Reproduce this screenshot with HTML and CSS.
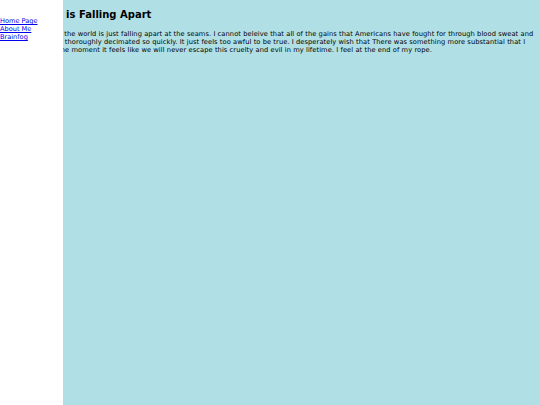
FILE: index.html
```html
<!DOCTYPE html>
<html>
<head>
<meta charset="utf-8">
<title>Falling Apart</title>
<link rel="stylesheet" href="styles.css">
</head>
<body>
<nav class="sidebar">
  <a href="#">Home Page</a>
  <a href="#">About Me</a>
  <a href="#">Brainfog</a>
</nav>
<main class="content">
  <h2 class="title">The Earth is Falling Apart</h2>
  <p class="post">Lately, it seems the world is just falling apart at the seams. I cannot beleive that all of the gains that Americans have fought for through blood sweat and tears, can be so thoroughly decimated so quickly. It just feels too awful to be true. I desperately wish that There was something more substantial that I can do. But at the moment it feels like we will never escape this cruelty and evil in my lifetime. I feel at the end of my rope.</p>
</main>
</body>
</html>
```
FILE: styles.css
```css
html, body {
  margin: 0;
  padding: 0;
}
body {
  background: #b0e0e6;
  font-family: "DejaVu Sans", Verdana, sans-serif;
  color: #000;
  min-height: 405px;
}
.sidebar {
  position: fixed;
  left: 0;
  top: 0;
  bottom: 0;
  width: 63px;
  background: #fff;
  padding-top: 17px;
  box-sizing: border-box;
  display: flex;
  flex-direction: column;
  font-size: 6.6px;
  line-height: 8px;
}
.sidebar a {
  color: #0000ee;
}
.content {
  padding: 0 4px 0 8px;
}
.title {
  margin: 0;
  padding-top: 9px;
  font-size: 10px;
  line-height: 12px;
  font-weight: bold;
}
.post {
  margin: 9px 0 0;
  font-size: 6.7px;
  line-height: 8px;
  letter-spacing: 0.07px;
}
```
